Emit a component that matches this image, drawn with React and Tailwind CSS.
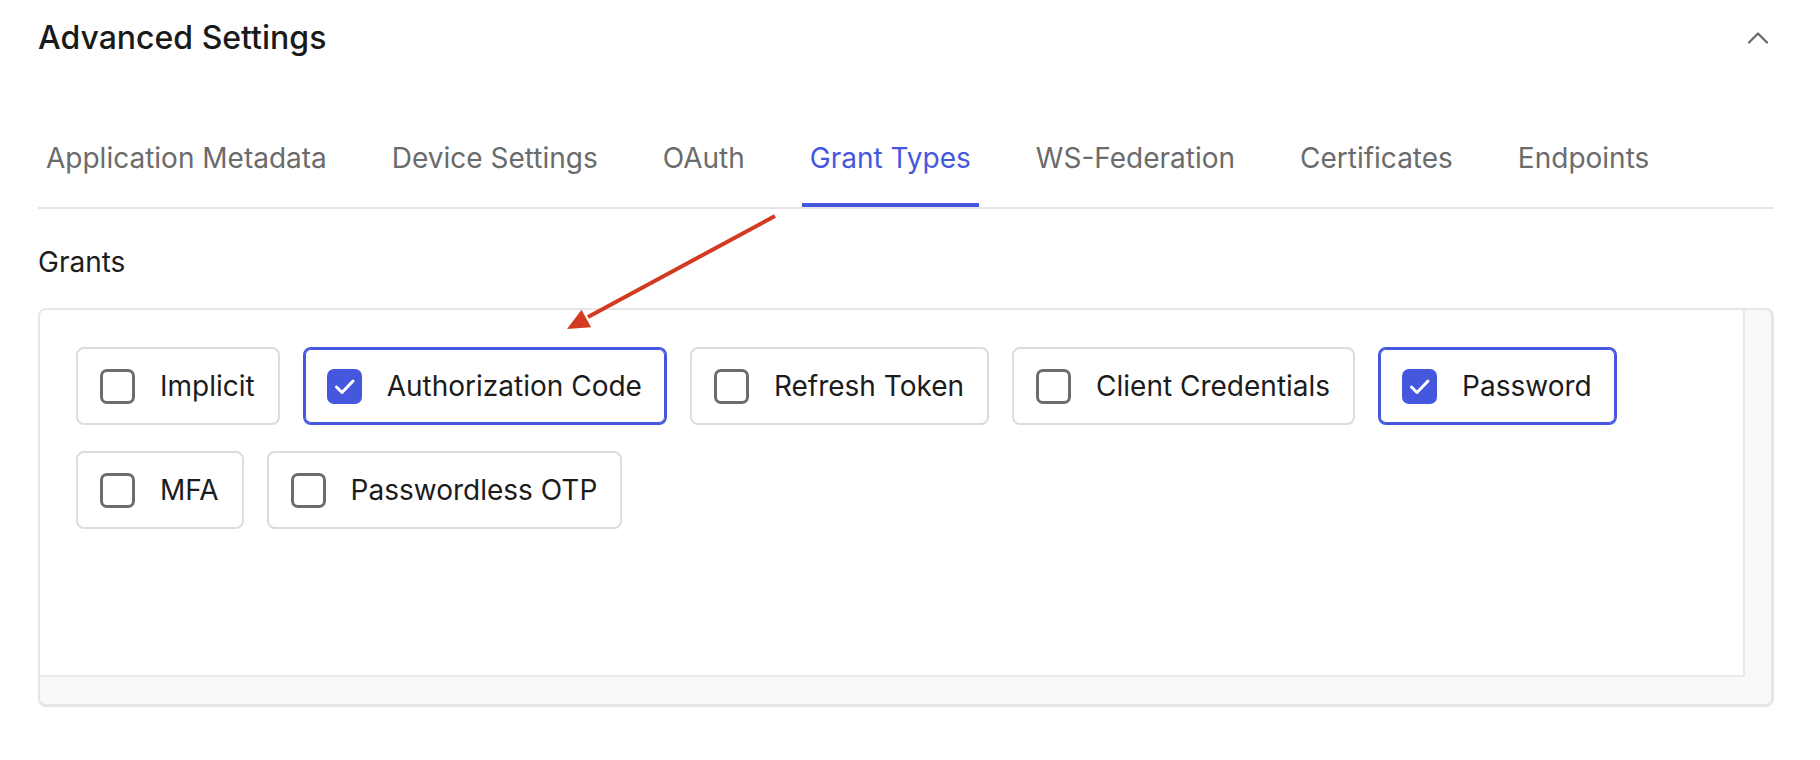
import React, { useState } from "react";

const tabs = [
  "Application Metadata",
  "Device Settings",
  "OAuth",
  "Grant Types",
  "WS-Federation",
  "Certificates",
  "Endpoints",
];

const initialGrants = [
  { name: "Implicit", checked: false },
  { name: "Authorization Code", checked: true },
  { name: "Refresh Token", checked: false },
  { name: "Client Credentials", checked: false },
  { name: "Password", checked: true },
  { name: "MFA", checked: false },
  { name: "Passwordless OTP", checked: false },
];

const CheckBox = ({ checked }) =>
  checked ? (
    <span className="flex h-[35px] w-[35px] shrink-0 items-center justify-center rounded-[7px] bg-[#4558dd]">
      <svg width="35" height="35" viewBox="0 0 35 35" fill="none">
        <polyline
          points="9.5,18 15,23.5 26,12"
          stroke="white"
          strokeWidth="3"
          strokeLinecap="round"
          strokeLinejoin="round"
        />
      </svg>
    </span>
  ) : (
    <span className="h-[35px] w-[35px] shrink-0 rounded-[7px] border-[3px] border-[#6c6c6c] bg-white" />
  );

const GrantChip = ({ name, checked, onToggle }) => (
  <button
    onClick={onToggle}
    className={`flex h-[78px] items-center gap-[25px] rounded-[8px] border-2 bg-white pl-[22px] pr-[23px] ${
      checked ? "border-[#4558dd] ring-1 ring-inset ring-[#4558dd]" : "border-[#dcdcdc]"
    }`}
  >
    <CheckBox checked={checked} />
    <span className="text-[28px] leading-[34px] text-[#1c1c1c]">{name}</span>
  </button>
);

const App = () => {
  const [active, setActive] = useState("Grant Types");
  const [grants, setGrants] = useState(initialGrants);

  const toggle = (i) => {
    setGrants((prev) =>
      prev.map((g, idx) => (idx === i ? { ...g, checked: !g.checked } : g))
    );
  };

  return (
    <div className="relative min-h-[760px] bg-white pt-[18px] pl-[38px] pr-[46px] font-['Inter',sans-serif]">
      {/* header */}
      <div className="flex h-[40px] items-center justify-between">
        <h1 className="text-[32px] font-medium leading-[40px] text-[#1a1a1a]">
          Advanced Settings
        </h1>
        <svg width="24" height="24" viewBox="0 0 24 24" fill="none" className="mr-[4px]">
          <polyline
            points="3,16.5 12,7.5 21,16.5"
            stroke="#666"
            strokeWidth="2.2"
            strokeLinecap="round"
            strokeLinejoin="round"
          />
        </svg>
      </div>

      {/* tabs */}
      <div className="mt-[83px] flex gap-[49px] border-b-2 border-[#e6e6e6]">
        {tabs.map((t) => (
          <button
            key={t}
            onClick={() => setActive(t)}
            className={`border-b-4 px-2 pb-[28px] text-[28px] leading-[34px] ${
              active === t
                ? "border-[#4558dd] text-[#4558dd]"
                : "border-transparent text-[#6b6b6b]"
            }`}
          >
            {t}
          </button>
        ))}
      </div>

      <h2 className="mt-[36px] text-[28px] leading-[34px] text-[#1c1c1c]">Grants</h2>

      {/* grants box with empty scroll tracks */}
      <div className="mt-[29px] h-[399px] rounded-[8px] border-2 border-r-[3px] border-b-[3px] border-[#e6e6e6] bg-[#f9f9f9]">
        <div className="mr-[26px] mb-[27px] flex h-[367px] flex-wrap content-start gap-x-[23px] gap-y-[26px] rounded-tl-[6px] border-r-2 border-b-2 border-[#e8e8e8] bg-white pl-[36px] pt-[37px] pr-[20px]">
          {grants.map((g, i) => (
            <GrantChip key={g.name} {...g} onToggle={() => toggle(i)} />
          ))}
        </div>
      </div>

      {/* annotation arrow */}
      <svg
        className="pointer-events-none absolute left-0 top-0"
        width="1820"
        height="760"
        viewBox="0 0 1820 760"
      >
        <line x1="775" y1="216" x2="588" y2="317" stroke="#d33b21" strokeWidth="4" />
        <polygon points="567,329 581.5,309.7 591.1,327.3" fill="#d33b21" />
      </svg>
    </div>
  );
};

export default App;
